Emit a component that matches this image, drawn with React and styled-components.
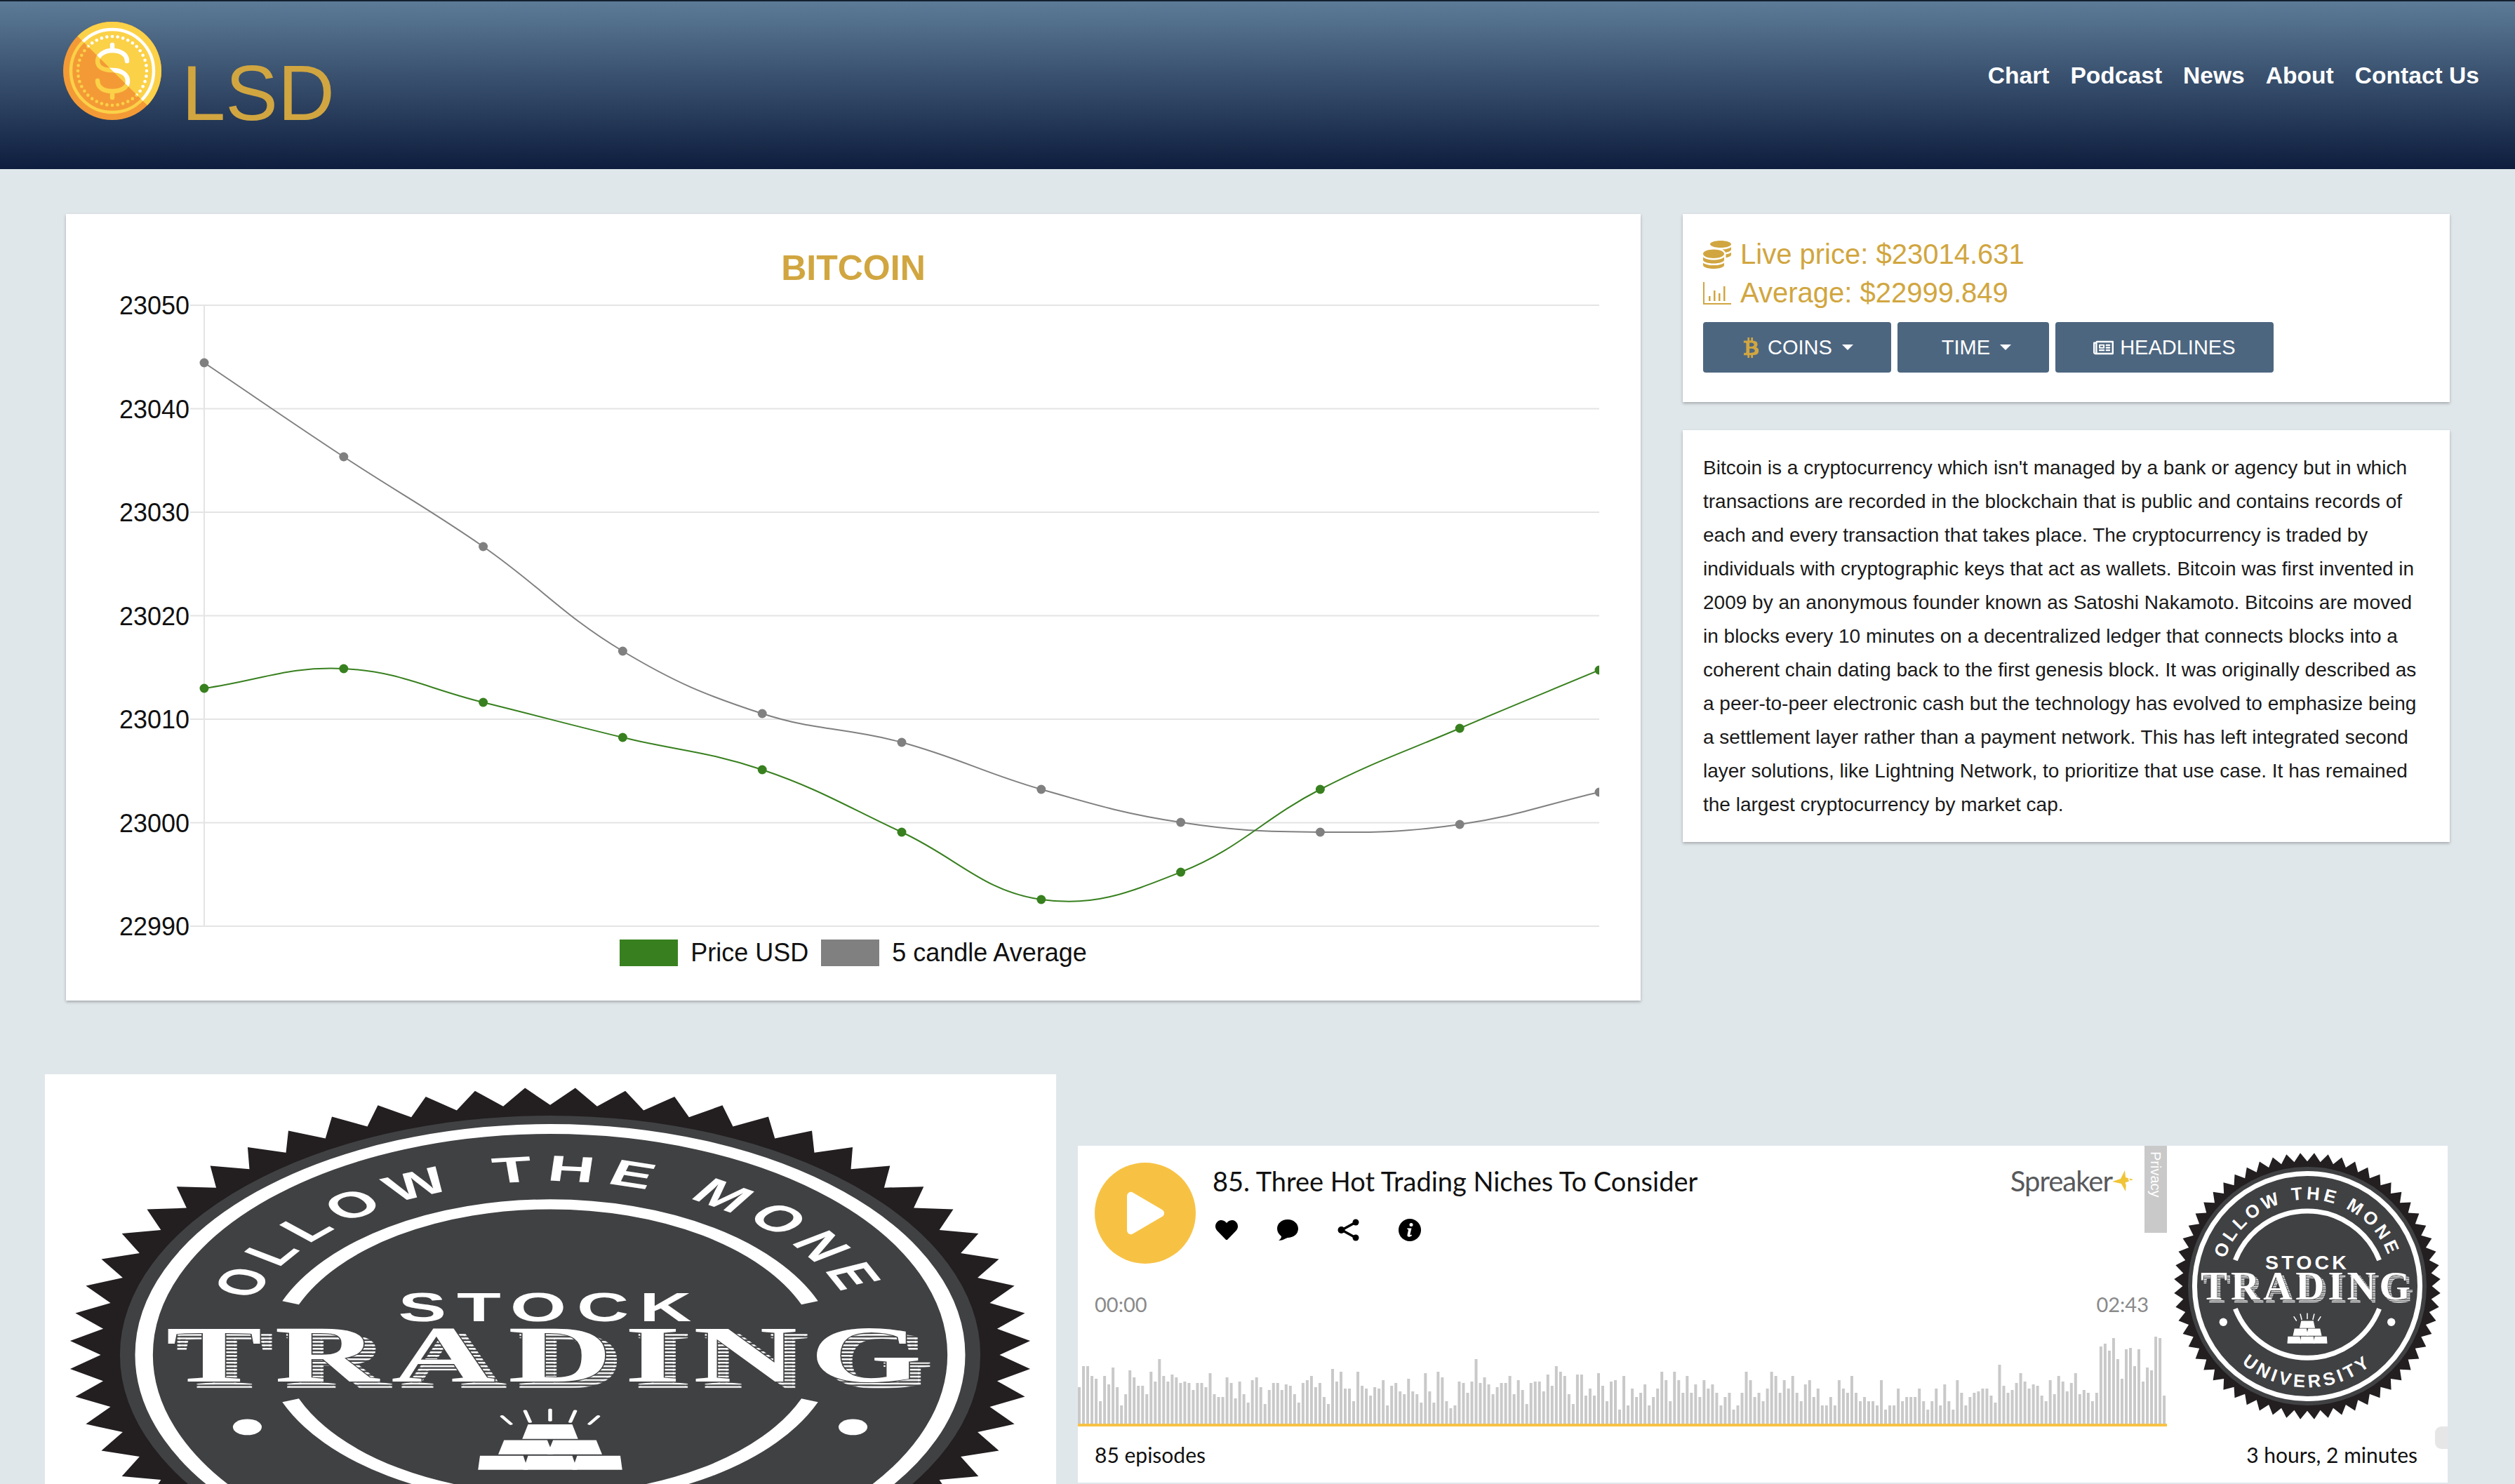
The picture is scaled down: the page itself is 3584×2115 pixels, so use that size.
import React from "react";
import styled, { createGlobalStyle } from "styled-components";
import { FaCoins, FaBtc, FaRegNewspaper, FaHeart } from "react-icons/fa";

const gold = "#d1a640";
const sans = `"Liberation Sans", Arial, sans-serif`;
const avenir = `Lato, "Open Sans", sans-serif`;

const GlobalStyle = createGlobalStyle`
  html, body {
    margin: 0;
    height: 100vh;
    overflow: hidden;
    background: #e0e7eb;
    font-family: ${sans};
  }
  * { box-sizing: border-box; }
`;

const Header = styled.header`
  display: flex;
  align-items: flex-start;
  height: 241px;
  padding: 29px 51px 0 90px;
  border-top: 2px solid #14202e;
  background: linear-gradient(#5c7b97, #0e1d3d);
`;

const Brand = styled.div`
  display: flex;
  gap: 29px;
`;

const BrandName = styled.span`
  margin-top: 46px;
  font-size: 112px;
  line-height: 1;
  color: ${gold};
`;

const Nav = styled.nav`
  display: flex;
  gap: 30px;
  margin: 57px 0 0 auto;
`;

const NavLink = styled.a`
  font-size: 33.6px;
  line-height: 40px;
  font-weight: 700;
  color: #fff;
`;

const TopRow = styled.section`
  display: flex;
  align-items: flex-start;
  gap: 60px;
  padding: 64px 0 0 94px;
`;

const Card = styled.div`
  background: #fff;
  box-shadow: 0 2px 4px rgba(0, 0, 0, 0.28);
`;

const ChartCard = styled(Card)`
  width: 2244px;
  height: 1121px;
  padding-top: 47px;
`;

const ChartTitle = styled.h2`
  margin: 0;
  font-size: 50px;
  line-height: 60px;
  font-weight: 700;
  text-align: center;
  color: ${gold};
`;

const ChartSvg = styled.svg`
  display: block;
  width: 2244px;
  height: 926px;
`;

const Legend = styled.div`
  display: flex;
  align-items: center;
  justify-content: center;
  height: 40px;
  font-size: 36px;
  color: #111;
`;

const LegendSwatch = styled.span`
  width: 83px;
  height: 38px;
  margin: 0 18px 0 0;
  background: ${(p) => p.$color};
`;

const LegendLabel = styled.span`
  margin-right: 18px;
`;

const SideColumn = styled.aside`
  display: flex;
  flex-direction: column;
  gap: 40px;
  width: 1093px;
`;

const PriceCard = styled(Card)`
  height: 268px;
  padding: 30px 29px 0;
`;

const PriceRow = styled.div`
  display: flex;
  align-items: center;
  gap: 13px;
  height: 55px;
  font-size: 40px;
  color: ${gold};
  svg {
    width: 40px;
    height: 40px;
    flex: none;
  }
`;

const Buttons = styled.div`
  display: flex;
  gap: 9px;
  margin-top: 14px;
`;

const Button = styled.button`
  display: flex;
  align-items: center;
  gap: 9px;
  height: 72px;
  padding: 0 54px;
  border: 0;
  border-radius: 4px;
  background: #4d6680;
  color: #fff;
  font-family: ${sans};
  font-size: 29px;
`;

const Caret = styled.span`
  width: 0;
  height: 0;
  margin-left: 5px;
  border-left: 8px solid transparent;
  border-right: 8px solid transparent;
  border-top: 8px solid #fff;
`;

const Description = styled(Card)`
  height: 587px;
  padding: 30px 29px;
  font-size: 28px;
  line-height: 48px;
  color: #1a1a1a;
`;

const BottomRow = styled.section`
  display: flex;
  align-items: flex-start;
  gap: 31px;
  margin-top: 105px;
  padding-left: 64px;
`;

const PosterCard = styled.div`
  width: 1441px;
  height: 800px;
  padding: 19px 0 0 35px;
  background: #fff;
`;

const BadgeSvg = styled.svg`
  display: block;
  width: ${(p) => p.$w}px;
  height: ${(p) => p.$h}px;
`;

const Player = styled.div`
  position: relative;
  width: 1952px;
  margin-top: 102px;
  background: #fff;
`;

const PlayerBody = styled.div`
  display: grid;
  grid-template-columns: 1552px 400px;
  height: 400px;
`;

const PlayerMain = styled.div`
  position: relative;
  display: flex;
  flex-direction: column;
`;

const EpisodeRow = styled.div`
  display: flex;
  gap: 24px;
  padding: 24px 24px 0;
`;

const PlayButton = styled.div`
  display: flex;
  align-items: center;
  justify-content: center;
  width: 144px;
  height: 144px;
  border-radius: 50%;
  background: #f7c244;
`;

const EpisodeInfo = styled.div`
  flex: 1;
`;

const EpisodeTitle = styled.div`
  font-family: ${avenir};
  font-size: 38px;
  line-height: 52px;
  color: #111;
`;

const Actions = styled.div`
  display: flex;
  align-items: center;
  gap: 55px;
  margin: 28px 0 0 4px;
  height: 32px;
  svg {
    width: 32px;
    height: 32px;
    display: block;
  }
`;

const Spreaker = styled.div`
  display: flex;
  align-items: center;
  height: 52px;
  margin-right: 24px;
  font-family: ${avenir};
  font-size: 40px;
  letter-spacing: -1px;
  color: #58595b;
  svg {
    width: 30px;
    height: 30px;
  }
`;

const PrivacyTab = styled.div`
  position: absolute;
  top: 0;
  right: 0;
  width: 32px;
  height: 124px;
  padding-top: 8px;
  background: #c9c9c9;
  color: #fff;
  font-size: 20px;
  line-height: 32px;
  writing-mode: vertical-rl;
`;

const TimeRow = styled.div`
  display: flex;
  justify-content: space-between;
  margin-top: 38px;
  padding: 0 26px 0 24px;
  font-family: ${avenir};
  font-size: 29px;
  line-height: 40px;
  color: #8a8a8a;
`;

const Wave = styled.svg`
  display: block;
  margin-top: auto;
  width: 1552px;
  height: 128px;
`;

const PlayerArt = styled.div`
  padding: 10px 0 0 10px;
`;

const PlayerFooter = styled.div`
  display: flex;
  align-items: center;
  justify-content: space-between;
  height: 80px;
  padding: 0 43px 0 24px;
  font-family: ${avenir};
  font-size: 30px;
  color: #111;
`;

const ScrollPill = styled.div`
  position: absolute;
  top: 400px;
  right: 0;
  width: 18px;
  height: 32px;
  border-radius: 9px 0 0 9px;
  background: #e6e6e6;
`;

const xs = Array.from({ length: 11 }, (_, i) => 197 + i * 198.8);
const toLocal = (y) => y - 412;
const priceY = [981, 953, 1001, 1051, 1097, 1186, 1282, 1243, 1125, 1038, 955].map(toLocal);
const averageY = [517, 651, 779, 928, 1017, 1058, 1125, 1172, 1186, 1175, 1129].map(toLocal);
const ticks = [23050, 23040, 23030, 23020, 23010, 23000, 22990];

// same spline chart.js draws with tension 0.4
function spline(ys) {
  const pts = ys.map((y, i) => [xs[i], y]);
  const ctrl = pts.map((p, i) => {
    const a = pts[i - 1] || p;
    const b = pts[i + 1] || p;
    const d1 = Math.hypot(p[0] - a[0], p[1] - a[1]);
    const d2 = Math.hypot(b[0] - p[0], b[1] - p[1]);
    const sum = d1 + d2 || 1;
    const fa = (0.4 * d1) / sum;
    const fb = (0.4 * d2) / sum;
    return {
      prev: [p[0] - fa * (b[0] - a[0]), p[1] - fa * (b[1] - a[1])],
      next: [p[0] + fb * (b[0] - a[0]), p[1] + fb * (b[1] - a[1])],
    };
  });
  let d = `M${pts[0][0]} ${pts[0][1]}`;
  for (let i = 1; i < pts.length; i++) {
    d += ` C${ctrl[i - 1].next.join(" ")} ${ctrl[i].prev.join(" ")} ${pts[i].join(" ")}`;
  }
  return d;
}

const Series = ({ ys, color }) => (
  <g>
    <path d={spline(ys)} fill="none" stroke={color} strokeWidth="2" />
    {ys.map((y, i) => (
      <circle key={i} cx={xs[i]} cy={y} r="6.5" fill={color} />
    ))}
  </g>
);

const PriceChart = () => (
  <ChartSvg viewBox="0 0 2244 926">
    <defs>
      <clipPath id="plot">
        <rect x="150" y="0" width="2035" height="926" />
      </clipPath>
    </defs>
    <line x1="197" x2="197" y1="23" y2="908" stroke="#e4e4e4" strokeWidth="2" />
    {ticks.map((t, i) => {
      const y = 23 + i * 147.5;
      return (
        <g key={t}>
          <line x1="177" x2="2185" y1={y} y2={y} stroke="#e4e4e4" strokeWidth="2" />
          <text x="176" y={y + 13} textAnchor="end" fontSize="36" fill="#111" fontFamily={sans}>
            {t}
          </text>
        </g>
      );
    })}
    <g clipPath="url(#plot)">
      <Series ys={averageY} color="#808080" />
      <Series ys={priceY} color="#38801f" />
    </g>
  </ChartSvg>
);

const BarsIcon = () => (
  <svg viewBox="0 0 40 32" fill="currentColor">
    <path d="M0 0h2v30h38v2H0z" />
    <path d="M8 20h2.5v7H8zM15 12h2.5v15H15zM22 16h2.5v11H22zM29 6h2.5v21H29z" />
  </svg>
);

const spikes = Array.from({ length: 120 }, (_, i) => {
  const r = i % 2 ? 100 : 93.5;
  const a = (i * 3 * Math.PI) / 180;
  return `${(r * Math.sin(a)).toFixed(2)},${(-r * Math.cos(a)).toFixed(2)}`;
}).join(" ");

const arc = (r, deg, sweep) => {
  const a = (deg * Math.PI) / 180;
  const x = (r * Math.sin(a)).toFixed(2);
  const y = (r * Math.cos(a)).toFixed(2);
  return { x, y, r, sweep };
};

const upper = arc(65, 72);
const lower = arc(76, 62);

const Badge = ({ uid, w, h, stretch }) => (
  <BadgeSvg
    $w={w}
    $h={h}
    viewBox="-100 -100 200 200"
    preserveAspectRatio={stretch ? "none" : "xMidYMid meet"}
    fontFamily={sans}
    fontWeight="700"
  >
    <defs>
      <path id={`${uid}-top`} d={`M${-upper.x} ${-upper.y} A65 65 0 0 1 ${upper.x} ${-upper.y}`} />
      <path id={`${uid}-bottom`} d={`M${-lower.x} ${lower.y} A76 76 0 0 0 ${lower.x} ${lower.y}`} />
      <pattern id={`${uid}-hatch`} width="4" height="1.3" patternUnits="userSpaceOnUse">
        <rect width="4" height="0.65" fill="#fff" />
      </pattern>
    </defs>
    <polygon points={spikes} fill="#231f20" />
    <circle r="89.5" fill="#404143" />
    <circle r="84.5" fill="none" stroke="#fff" strokeWidth="3.7" />
    <path d="M-54 -19.5 A58 58 0 0 1 54 -19.5" fill="none" stroke="#fff" strokeWidth="3.7" />
    <path d="M-54 17 A58 58 0 0 0 54 17" fill="none" stroke="#fff" strokeWidth="3.7" />
    <text fontSize="13.5" fill="#fff" letterSpacing="2.6" textAnchor="middle">
      <textPath href={`#${uid}-top`} startOffset="50%">
        FOLLOW THE MONEY
      </textPath>
    </text>
    <text fontSize="13.5" fill="#fff" letterSpacing="2.6" textAnchor="middle">
      <textPath href={`#${uid}-bottom`} startOffset="50%">
        UNIVERSITY
      </textPath>
    </text>
    <text y="-12.5" textAnchor="middle" fontSize="15" letterSpacing="2.2" fill="#fff">
      STOCK
    </text>
    <g fontFamily={`"Liberation Serif", serif`} fontSize="30" textAnchor="middle" letterSpacing="2.6">
      <text x="2.2" y="12.2" fill={`url(#${uid}-hatch)`} stroke={`url(#${uid}-hatch)`} strokeWidth="0.6">
        TRADING
      </text>
      <text x="0" y="10" fill="#fff" stroke="#404143" strokeWidth="0.5" paintOrder="stroke">
        TRADING
      </text>
    </g>
    <circle cx="-63" cy="27" r="3" fill="#fff" />
    <circle cx="63" cy="27" r="3" fill="#fff" />
    <g fill="#fff">
      <polygon points="-4.6,26 4.6,26 5.8,31.4 -5.8,31.4" />
      <polygon points="-9.6,31.9 -0.6,31.9 0.6,37.2 -10.8,37.2" />
      <polygon points="0.6,31.9 9.6,31.9 10.8,37.2 -0.6,37.2" />
      <polygon points="-14.6,37.7 -5.6,37.7 -4.6,43 -15,43" />
      <polygon points="-4.6,37.7 4.6,37.7 5.6,43 -5.6,43" />
      <polygon points="5.6,37.7 14.6,37.7 15,43 4.6,43" />
    </g>
    <g stroke="#fff" strokeWidth="0.8" strokeLinecap="round">
      <line x1="0" y1="20.5" x2="0" y2="24.5" />
      <line x1="-5.2" y1="21" x2="-4.2" y2="25" />
      <line x1="5.2" y1="21" x2="4.2" y2="25" />
      <line x1="-10" y1="23" x2="-8.2" y2="25.8" />
      <line x1="10" y1="23" x2="8.2" y2="25.8" />
    </g>
  </BadgeSvg>
);

const coinDots = Array.from({ length: 40 }, (_, i) => {
  const a = (i * 9 * Math.PI) / 180;
  return [70 + 49 * Math.cos(a), 70 + 49 * Math.sin(a)];
});

const CoinFace = ({ disc, mark }) => (
  <g>
    <circle cx="70" cy="70" r="70" fill={disc} />
    <circle cx="70" cy="70" r="59" fill="none" stroke={mark} strokeWidth="4.5" />
    {coinDots.map(([x, y], i) => (
      <circle key={i} cx={x} cy={y} r="2.3" fill={mark} />
    ))}
    <path
      d="M91 56C91 46 81 41 70 41C58 41 49 48 49 56C49 66 60 69 70 69C82 69 92 74 92 85C92 94 82 99 70 99C58 99 49 94 49 84M70 33V41M70 99V108"
      fill="none"
      stroke={mark}
      strokeWidth="6.5"
      strokeLinecap="round"
    />
  </g>
);

const CoinLogo = () => (
  <svg width="140" height="140" viewBox="0 0 140 140">
    <defs>
      <clipPath id="coin-half">
        <polygon points="0,-1 140,-1 140,140 141,140 21,21" />
      </clipPath>
    </defs>
    <CoinFace disc="#f39a36" mark="#fbd148" />
    <g clipPath="url(#coin-half)">
      <CoinFace disc="#fbd148" mark="#fff" />
    </g>
  </svg>
);

const headBars = [
  231, 141, 141, 183, 195, 291, 183, 219, 147, 231, 309, 261, 159, 189, 225, 225, 261, 165, 207, 111, 183, 207, 177,
  189, 213, 207, 213, 243, 213, 213, 231, 171, 261, 273, 273, 189, 213, 279, 207, 261, 297, 201, 189, 231, 303, 243,
  213, 213, 243, 219, 225, 261, 297, 213, 201, 183, 231, 213, 273, 303, 153, 207, 165, 237, 237, 291, 165, 225, 237,
  267, 231, 237, 201, 309, 225, 213, 249, 261, 195, 249, 261, 297, 171, 249, 297, 165, 189, 291, 321, 309, 207, 213,
  255, 207, 111, 213, 189, 219, 261, 231, 213, 213, 183, 261, 201, 243, 303, 213, 207, 207, 249, 177, 225, 141, 165,
  183, 261, 303, 177, 177, 267, 237, 267, 171, 225, 291, 207, 201,
].map((t) => (387 - t) / 3);

const tailBars = [
  1113, 1095, 1089, 1077, 1077, 1107, 1137, 975, 1065, 1095, 1083, 1053, 1011, 1047, 1077, 1059, 1065, 1107, 1131,
  1041, 1101, 1023, 1047, 1089, 1053, 1011, 1101, 1083, 1095, 1131, 1095, 897, 885, 915, 861, 951, 1035, 909, 903, 981,
  909, 1047, 987, 999, 855, 861, 1107,
].map((t) => (1227 - t) / 3);

const middleCount = 258 - headBars.length - tailBars.length;
const middleBars = Array.from({ length: middleCount }, (_, i) => {
  const n = Math.sin(i * 12.9898) * 43758.5453;
  const r = n - Math.floor(n);
  return 20 + Math.round(r * 9) * 6;
});
const bars = [...headBars, ...middleBars, ...tailBars];

const Waveform = () => (
  <Wave viewBox="0 0 1552 128">
    {bars.map((h, i) => (
      <rect key={i} x={i * 6.016} y={124 - h} width="4" height={h} fill="#c9c9c9" />
    ))}
    <rect y="124" width="1552" height="4" fill="#f7c244" />
  </Wave>
);

const App = () => (
  <>
    <GlobalStyle />
    <Header>
      <Brand>
        <CoinLogo />
        <BrandName>LSD</BrandName>
      </Brand>
      <Nav>
        {["Chart", "Podcast", "News", "About", "Contact Us"].map((item) => (
          <NavLink key={item}>{item}</NavLink>
        ))}
      </Nav>
    </Header>
    <TopRow>
      <ChartCard>
        <ChartTitle>BITCOIN</ChartTitle>
        <PriceChart />
        <Legend>
          <LegendSwatch $color="#38801f" />
          <LegendLabel>Price USD</LegendLabel>
          <LegendSwatch $color="#808080" />
          <span>5 candle Average</span>
        </Legend>
      </ChartCard>
      <SideColumn>
        <PriceCard>
          <PriceRow>
            <FaCoins />
            Live price: $23014.631
          </PriceRow>
          <PriceRow>
            <BarsIcon />
            Average: $22999.849
          </PriceRow>
          <Buttons>
            <Button>
              <FaBtc color={gold} />
              COINS
              <Caret />
            </Button>
            <Button>
              <BarsIcon />
              TIME
              <Caret />
            </Button>
            <Button>
              <FaRegNewspaper />
              HEADLINES
            </Button>
          </Buttons>
        </PriceCard>
        <Description>
          Bitcoin is a cryptocurrency which isn't managed by a bank or agency but in which transactions are recorded in
          the blockchain that is public and contains records of each and every transaction that takes place. The
          cryptocurrency is traded by individuals with cryptographic keys that act as wallets. Bitcoin was first
          invented in 2009 by an anonymous founder known as Satoshi Nakamoto. Bitcoins are moved in blocks every 10
          minutes on a decentralized ledger that connects blocks into a coherent chain dating back to the first genesis
          block. It was originally described as a peer-to-peer electronic cash but the technology has evolved to
          emphasize being a settlement layer rather than a payment network. This has left integrated second layer
          solutions, like Lightning Network, to prioritize that use case. It has remained the largest cryptocurrency by
          market cap.
        </Description>
      </SideColumn>
    </TopRow>
    <BottomRow>
      <PosterCard>
        <Badge uid="poster" w={1370} h={762} stretch />
      </PosterCard>
      <Player>
        <PlayerBody>
          <PlayerMain>
            <EpisodeRow>
              <PlayButton>
                <svg width="56" height="62" viewBox="0 0 56 62">
                  <path
                    d="M2 7C2 2 7 -1 11 2L52 26C56 28 56 34 52 36L11 60C7 63 2 60 2 55Z"
                    fill="#fff"
                  />
                </svg>
              </PlayButton>
              <EpisodeInfo>
                <EpisodeTitle>85. Three Hot Trading Niches To Consider</EpisodeTitle>
                <Actions>
                  <FaHeart />
                  <svg viewBox="0 0 32 32">
                    <path d="M16 1C24.800 1 31 7 31 14C31 22 24 27 16 27C14 27 10 31 3 31C6 29 7 27 7 25C3 22 1 18 1 14C1 7 7 1 16 1Z" />
                  </svg>
                  <svg viewBox="0 0 32 32">
                    <path d="M26 5L6 16L26 27" fill="none" stroke="#000" strokeWidth="3.500" />
                    <circle cx="26" cy="5" r="4.500" />
                    <circle cx="5.500" cy="16" r="5" />
                    <circle cx="26" cy="27" r="4.500" />
                  </svg>
                  <svg viewBox="0 0 32 32">
                    <circle cx="16" cy="16" r="16" />
                    <circle cx="18" cy="8.500" r="2.500" fill="#fff" />
                    <path d="M12.500 13.500H18.500L16.500 22C16.300 23 17 23.500 18.500 22.500L19 24C16 26.500 12 26.500 12.500 23L14 16C14 15 13 15 12.300 15Z" fill="#fff" />
                  </svg>
                </Actions>
              </EpisodeInfo>
              <Spreaker>
                Spreaker
                <svg viewBox="0 0 30 30">
                  <path d="M18 0L19 10L30 13L20 17L19 30L13 19L0 16L12 12Z" fill="#f0c435" />
                </svg>
              </Spreaker>
            </EpisodeRow>
            <PrivacyTab>Privacy Policy</PrivacyTab>
            <TimeRow>
              <span>00:00</span>
              <span>02:43</span>
            </TimeRow>
            <Waveform />
          </PlayerMain>
          <PlayerArt>
            <Badge uid="art" w={380} h={380} />
          </PlayerArt>
        </PlayerBody>
        <PlayerFooter>
          <span>85 episodes</span>
          <span>3 hours, 2 minutes</span>
        </PlayerFooter>
        <ScrollPill />
      </Player>
    </BottomRow>
  </>
);

export default App;
